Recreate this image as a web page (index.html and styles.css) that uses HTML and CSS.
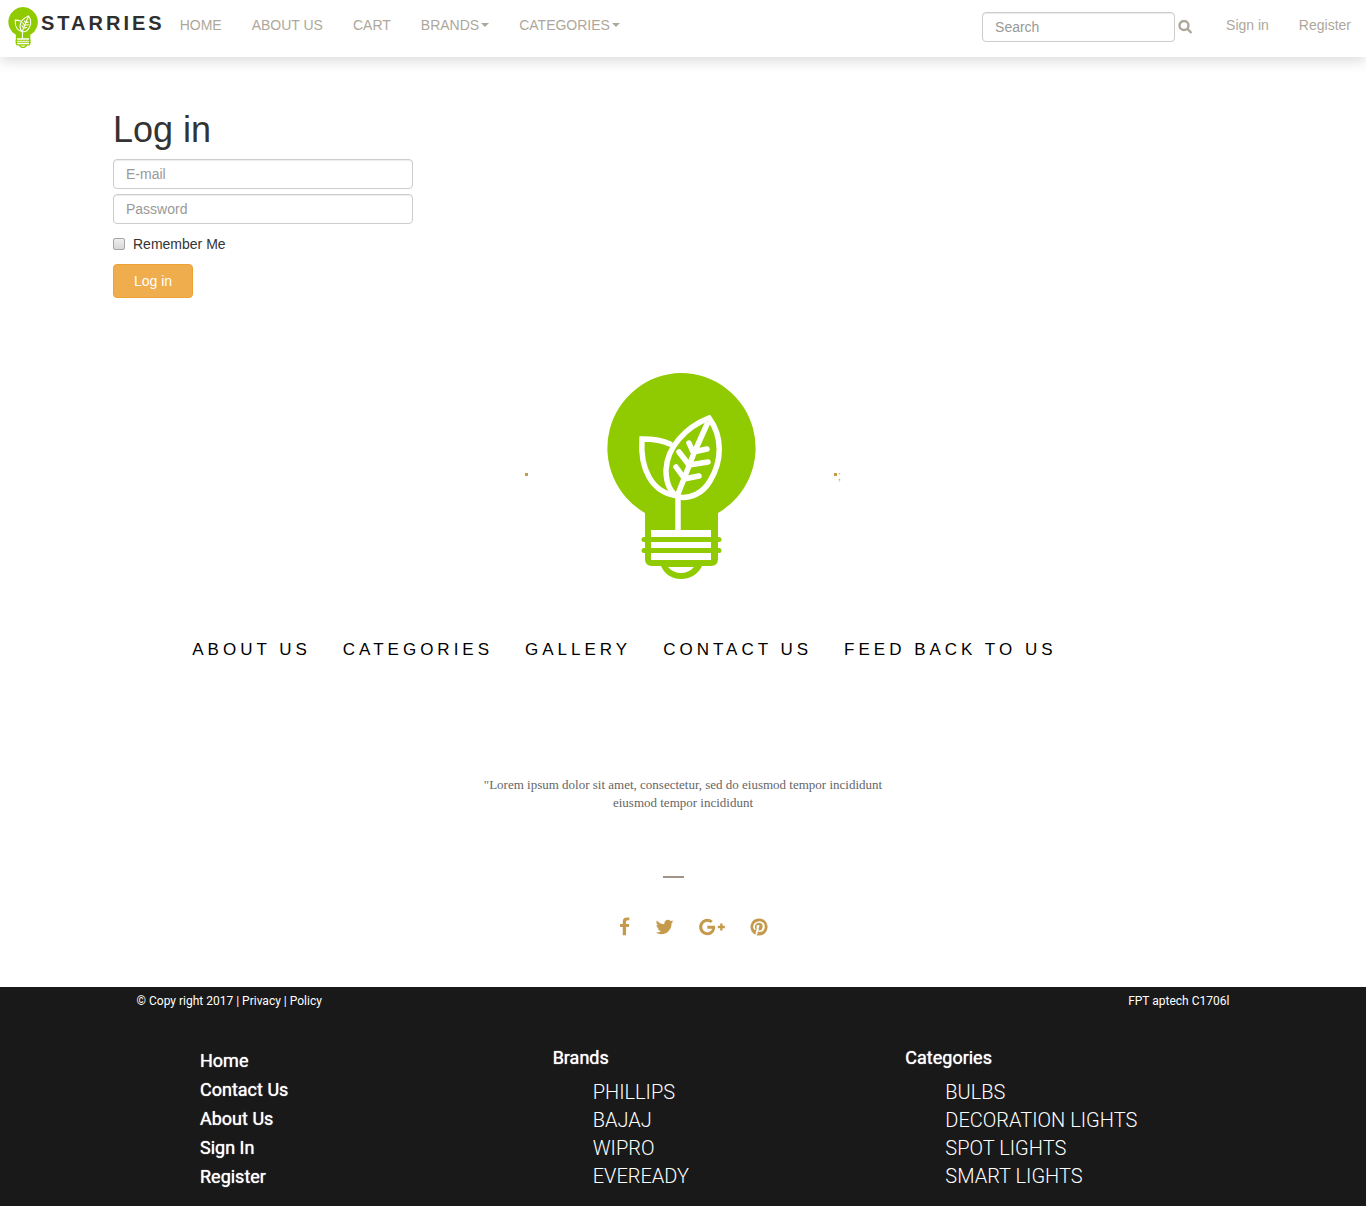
FILE: index.html
```html
<!DOCTYPE html>
<html lang="en">
<head>
<meta charset="utf-8">
<title>Starries - Log in</title>
<meta name="viewport" content="width=device-width, initial-scale=1">
<link rel="stylesheet" href="styles.css">
</head>
<body>
<svg class="sprite" aria-hidden="true">
  <symbol id="bulb" viewBox="0 0 150 206">
    <path fill="#90ca00" d="M75 0a75 75 0 0 1 37 140v24h1a2.500 2.500 0 0 1 0 5h-1v6h1a2.500 2.500 0 0 1 0 5h-1v6q0 7-7 7h-9c-3 7-11 13-21 13s-17-6-20-13h-9q-7 0-7-7v-6h-1a2.500 2.500 0 0 1 0-5h1v-6h-1a2.500 2.500 0 0 1 0-5h1v-24A75 75 0 0 1 75 0z"/>
    <path fill="#fff" d="M45 157h60v7H45zM45 169h60v6H45zM45 180h60v7H45zM62 194h26c-7 8-19 8-26 0z"/>
    <g fill="none" stroke="#fff" stroke-width="5.500" stroke-linecap="round">
      <path d="M103 45C80 54 61 74 60 97c0 12 4 22 12 27 13 2 25-4 32-16 12-20 13-44-1-63z"/>
      <path d="M64 71C56 67 45 66 36 66c-2 29 9 54 36 57"/>
      <path d="M102 49L88 80 72 121V159" stroke-linecap="butt"/>
      <path d="M87 79l14-3M83 92l19-3M78 106l15-3M87 79l-4-9M83 92L73 79M78 105l-8-11"/>
    </g>
  </symbol>
</svg>

<header class="navbar">
  <a class="brand" href="#"><svg class="brand-logo" aria-hidden="true"><use href="#bulb"/></svg><span>STARRIES</span></a>
  <nav class="menu">
    <a href="#">HOME</a>
    <a href="#">ABOUT US</a>
    <a href="#">CART</a>
    <a href="#">BRANDS<i class="caret"></i></a>
    <a href="#">CATEGORIES<i class="caret"></i></a>
  </nav>
  <form class="search">
    <input class="field" type="text" placeholder="Search" aria-label="Search">
    <button type="button" aria-label="Search">
      <svg viewBox="0 0 15 15" aria-hidden="true"><circle cx="6" cy="5.500" r="4.500"/><path d="M9.200 8.700l4.300 4.300"/></svg>
    </button>
  </form>
  <nav class="menu">
    <a href="#">Sign in</a>
    <a href="#">Register</a>
  </nav>
</header>

<main class="container">
  <form class="login">
    <h1>Log in</h1>
    <input class="field" type="email" placeholder="E-mail" aria-label="E-mail">
    <input class="field" type="password" placeholder="Password" aria-label="Password">
    <label><input type="checkbox">Remember Me</label>
    <button type="button">Log in</button>
  </form>
</main>

<section class="showcase">
  <div class="emblem">
    <i class="dot"></i>
    <svg class="emblem-logo" role="img" aria-label="Starries"><use href="#bulb"/></svg>
    <span class="emblem-end"><i class="dot"></i>;</span>
  </div>
  <nav class="links">
    <a href="#">ABOUT US</a>
    <a href="#">CATEGORIES</a>
    <a href="#">GALLERY</a>
    <a href="#">CONTACT US</a>
    <a href="#">FEED BACK TO US</a>
  </nav>
  <p class="quote">"Lorem ipsum dolor sit amet, consectetur, sed do eiusmod tempor incididunt<br>eiusmod tempor incididunt</p>
  <div class="divider"><hr class="rule"></div>
  <div class="social">
    <a href="#" aria-label="Facebook"><svg viewBox="384 0 1024 1792" width="11" height="20"><path d="M1343 12v264h-157q-86 0-116 36t-30 108v189h293l-39 296h-254v759h-306v-759h-255v-296h255v-218q0-186 104-288.500t277-102.500q147 0 228 12z"/></svg></a>
    <a href="#" aria-label="Twitter"><svg viewBox="64 0 1664 1792" width="19" height="20"><path d="M1684 408q-67 98-162 167 1 14 1 42 0 130-38 259.500t-115.500 248.500-184.500 210.500-258 146-323 54.500q-271 0-496-145 35 4 78 4 225 0 401-138-105-2-188-64.500t-114-159.500q33 5 61 5 43 0 85-11-112-23-185.500-111.500t-73.500-205.500v-4q68 38 146 41-66-44-105-115t-39-154q0-88 44-163 121 149 294.500 238.500t371.500 99.500q-8-38-8-74 0-134 94.500-228.500t228.500-94.500q140 0 236 102 109-21 205-78-37 115-142 178 93-10 186-50z"/></svg></a>
    <a href="#" aria-label="Google Plus"><svg viewBox="0 0 2304 1792" width="26" height="20"><path d="M1437 913q0 208-87 370.500t-248 254-369 91.500q-149 0-285-58t-234-156-156-234-58-285 58-285 156-234 234-156 285-58q286 0 491 192l-199 191q-117-113-292-113-123 0-227.500 62t-165.500 168.500-61 232.500 61 232.500 165.500 168.500 227.500 62q83 0 152.500-23t114.500-57.500 78.500-78.500 49-83 21.500-74h-416v-252h692q12 63 12 122zM2304 791v210h-209v209h-210v-209h-209v-210h209v-209h210v209h209z"/></svg></a>
    <a href="#" aria-label="Pinterest"><svg viewBox="128 0 1536 1792" width="18" height="20"><path d="M1664 896q0 209-103 385.500t-279.500 279.500-385.500 103q-111 0-218-32 59-93 78-164 9-34 54-211 20 39 73 67.500t114 28.500q121 0 216-68.500t147-188.500 52-270q0-114-59.500-214t-172.500-163-255-63q-105 0-196 29t-154.500 77-109 110.500-67 129.500-21.500 134q0 104 40 183t117 111q30 12 38-20 2-7 8-31t8-30q6-23-11-43-51-61-51-151 0-151 104.500-259.500t273.500-108.500q151 0 235.500 82t84.500 213q0 170-68.500 289t-175.500 119q-61 0-98-43.500t-23-104.500q8-35 26.500-93.500t30-103 11.500-75.500q0-50-27-83t-77-33q-62 0-105 57t-43 142q0 73 25 122l-99 418q-17 70-13 177-206-91-333-281t-127-423q0-209 103-385.500t279.500-279.500 385.500-103 385.500 103 279.500 279.500 103 385.500z"/></svg></a>
  </div>
</section>

<footer class="footer">
  <div class="legal">
    <span>© Copy right 2017 | <a href="#">Privacy</a> | <a href="#">Policy</a></span>
    <span>FPT aptech C1706l</span>
  </div>
  <div class="columns">
    <ul class="pages">
      <li><a href="#">Home</a></li>
      <li><a href="#">Contact Us</a></li>
      <li><a href="#">About Us</a></li>
      <li><a href="#">Sign In</a></li>
      <li><a href="#">Register</a></li>
    </ul>
    <div>
      <h2>Brands</h2>
      <ul class="items">
        <li><a href="#">PHILLIPS</a></li>
        <li><a href="#">BAJAJ</a></li>
        <li><a href="#">WIPRO</a></li>
        <li><a href="#">EVEREADY</a></li>
      </ul>
    </div>
    <div>
      <h2>Categories</h2>
      <ul class="items">
        <li><a href="#">BULBS</a></li>
        <li><a href="#">DECORATION LIGHTS</a></li>
        <li><a href="#">SPOT LIGHTS</a></li>
        <li><a href="#">SMART LIGHTS</a></li>
      </ul>
    </div>
  </div>
</footer>
</body>
</html>
```
FILE: styles.css
```css
* { box-sizing: border-box; }

body {
  margin: 0;
  background: #fff;
  color: #333;
  font: 14px/20px "Liberation Sans", Arial, sans-serif;
}

a { color: inherit; text-decoration: none; }
ul { margin: 0; padding: 0; list-style: none; }
.sprite { display: none; }

.field {
  display: block;
  height: 30px;
  padding: 4px 12px;
  border: 1px solid #ccc;
  border-radius: 4px;
  background: #fff;
  box-shadow: inset 0 1px 1px rgba(0, 0, 0, .075);
  color: #555;
  font: inherit;
}
.field::placeholder { color: #999; opacity: 1; }

/* Top bar */
.navbar {
  display: flex;
  align-items: flex-start;
  min-height: 57px;
  background: #fff;
  box-shadow: 0 4px 12px rgba(0, 0, 0, .14);
  color: #aea79b;
}
.brand {
  display: flex;
  gap: 3px;
  padding: 7px 0 0 8px;
  color: #2f2f2f;
  font-size: 20px;
  font-weight: bold;
  letter-spacing: 3px;
  line-height: 33px;
}
.brand-logo { width: 30px; height: 41px; }
.menu { display: flex; }
.menu a { display: flex; align-items: center; padding: 15px; }
.caret {
  margin-left: 2px;
  border: 4px solid transparent;
  border-top-color: currentColor;
  border-bottom: 0;
}
.search { display: flex; align-items: center; gap: 3px; margin-left: auto; padding: 12px 18px 0 0; }
.search .field { width: 193px; }
.search button { padding: 0; border: 0; background: none; color: inherit; }
.search svg {
  display: block;
  width: 15px;
  height: 15px;
  fill: none;
  stroke: currentColor;
  stroke-width: 2.400;
}

/* Log in form */
.container { max-width: 1170px; margin: 0 auto; padding: 53px 15px 0; }
.login { display: flex; flex-direction: column; align-items: flex-start; gap: 5px; }
.login h1 { margin: 0 0 4px; font-size: 36px; font-weight: normal; line-height: 40px; }
.login .field { width: 300px; }
.login label { display: flex; align-items: center; gap: 8px; margin: 5px 0; }
.login [type="checkbox"] {
  appearance: none;
  width: 12px;
  height: 12px;
  margin: 0;
  border: 1px solid #a5a5a5;
  border-radius: 2px;
  background: linear-gradient(#eee, #d8d8d8);
}
.login button {
  width: 80px;
  height: 34px;
  padding: 0;
  border: 1px solid #eea236;
  border-radius: 4px;
  background: #f0ad4e;
  color: #fff;
  font: inherit;
}

/* Emblem, links and social icons */
.showcase { padding: 75px 0 50px; }
.emblem { display: flex; justify-content: center; align-items: center; gap: 78px; }
.emblem-logo { width: 150px; height: 206px; }
.emblem-end { display: flex; align-items: center; gap: 1px; color: #c3a684; font-size: 12px; }
.dot { width: 3px; height: 3px; margin-bottom: 4px; background: #c49a4c; }
.links {
  display: flex;
  flex-wrap: wrap;
  gap: 0 32px;
  width: 72%;
  margin: 61px auto 0;
  padding-left: 1px;
  color: #000;
  font-size: 17px;
  letter-spacing: 4px;
}
.quote {
  margin: 116px 0 0;
  color: #666;
  font: 13px/18px "Liberation Serif", "Times New Roman", serif;
  text-align: center;
}
.divider { margin-top: 64px; padding-right: 20px; }
.rule { width: 21px; height: 2px; margin: 0 auto; border: 0; background: #a0938a; }
.social { display: flex; justify-content: center; gap: 25px; margin-top: 39px; padding-left: 21px; }
.social svg { display: block; fill: #c49a4c; }

/* Footer */
.footer {
  min-height: 219px;
  padding: 4px 0 14px;
  background: #191919;
  color: #fff;
  font-family: Roboto, sans-serif;
}
.legal { display: flex; justify-content: space-between; width: 80%; margin: 0 auto; font-size: 12px; }
.columns { display: grid; grid-template-columns: repeat(3, 1fr); padding: 32px 108px 0 200px; }
.pages, .columns h2 {
  font-size: 18px;
  font-weight: 400;
  line-height: 29px;
  text-shadow: 0 0 1px #fff;
}
.pages { padding-top: 3px; }
.columns h2 { margin: 0 0 6px; }
.items { padding-left: 40px; font-size: 20px; font-weight: 300; line-height: 28px; }
```
